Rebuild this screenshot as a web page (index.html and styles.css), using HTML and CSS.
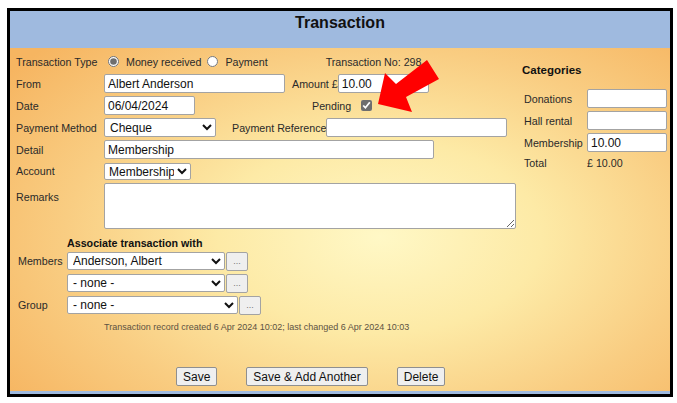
FILE: index.html
```html
<!DOCTYPE html>
<html lang="en">
<head>
  <meta charset="UTF-8" />
  <title>Transaction</title>
<link rel="stylesheet" href="styles.css">
</head>
<body>

<div class="window">
  <div class="titlebar"><h1>Transaction</h1></div>

  <div class="content">
    <div class="main">
      <div class="form">
        <div class="row">
          <span class="label">Transaction Type</span>
          <input type="radio" name="type" class="radio first" checked>
          <span>Money received</span>
          <input type="radio" name="type" class="radio">
          <span>Payment</span>
          <span class="txn-no">Transaction No: 298</span>
        </div>

        <div class="row">
          <span class="label">From</span>
          <input type="text" class="w-from" value="Albert Anderson">
          <span class="amount-label">Amount £</span>
          <input type="text" class="w-amount" value="10.00">
        </div>

        <div class="row">
          <span class="label">Date</span>
          <input type="text" class="w-date" value="06/04/2024">
          <span class="pending-label">Pending</span>
          <input type="checkbox" class="check" checked>
        </div>

        <div class="row">
          <span class="label">Payment Method</span>
          <select class="w-method"><option>Cheque</option></select>
          <span class="ref-label">Payment Reference</span>
          <input type="text" class="w-ref">
        </div>

        <div class="row">
          <span class="label">Detail</span>
          <input type="text" class="w-detail" value="Membership">
        </div>

        <div class="row short">
          <span class="label">Account</span>
          <select class="w-account"><option>Membership</option></select>
        </div>

        <div class="row tall">
          <span class="label">Remarks</span>
          <textarea class="w-remarks"></textarea>
        </div>
      </div>

      <div class="assoc">
        <div class="assoc-title">Associate transaction with</div>
        <div class="assoc-rows">
          <div class="assoc-row">
            <span class="assoc-label">Members</span>
            <select class="w-member"><option>Anderson, Albert</option></select>
            <button class="more">...</button>
          </div>
          <div class="assoc-row">
            <span class="assoc-label"></span>
            <select class="w-member"><option>- none -</option></select>
            <button class="more">...</button>
          </div>
          <div class="assoc-row">
            <span class="assoc-label">Group</span>
            <select class="w-group"><option>- none -</option></select>
            <button class="more">...</button>
          </div>
        </div>
      </div>

      <div class="stamp">Transaction record created 6 Apr 2024 10:02; last changed 6 Apr 2024 10:03</div>

      <div class="actions">
        <button class="btn">Save</button>
        <button class="btn">Save &amp; Add Another</button>
        <button class="btn">Delete</button>
      </div>
    </div>

    <div class="categories">
      <div class="cat-title">Categories</div>
      <div class="cat-grid">
        <span class="cat-label">Donations</span>
        <input type="text" class="w-cat">
        <span class="cat-label">Hall rental</span>
        <input type="text" class="w-cat">
        <span class="cat-label">Membership</span>
        <input type="text" class="w-cat" value="10.00">
        <span class="cat-label">Total</span>
        <span class="cat-total">£ 10.00</span>
      </div>
    </div>
  </div>
</div>

<svg class="arrow" width="677" height="403" viewBox="0 0 677 403">
  <polygon points="378,104 385,73 396,84 427,60 439,79 406,97 412,112" fill="#ff0000"/>
</svg>

</body>
</html>
```

FILE: styles.css
```css
* {
  box-sizing: border-box;
}

body {
  margin: 8px 0 0 7px;
  font-family: "Liberation Sans", Arial, sans-serif;
  font-size: 10.7px;
  color: #2a2a2a;
  background: #fff;
}

.window {
  width: 666px;
  height: 389px;
  border: 3px solid #000;
  display: flex;
  flex-direction: column;
}

.titlebar {
  height: 37px;
  background: #9fbadf;
  text-align: center;
  padding-top: 3px;
}

.titlebar h1 {
  margin: 0;
  font-size: 16px;
  line-height: 18px;
  font-weight: bold;
  color: #111;
}

.content {
  flex: 1;
  display: flex;
  background: radial-gradient(ellipse 70% 80% at 56% 55%, #fff8c6 0%, #fdeaa6 35%, #f9cd82 68%, #f6b561 100%);
  border-bottom: 3px solid #9fbadf;
}

.main {
  width: 512px;
  flex-shrink: 0;
  padding: 4px 0 0 6px;
}

/* form controls */
input[type="text"],
select,
textarea {
  font: 12px "Liberation Sans", Arial, sans-serif;
  color: #111;
  background: #fff;
  border: 1px solid #a3a3a3;
  border-radius: 2px;
  height: 19px;
  padding: 0 3px;
  margin: 0;
}

select {
  padding: 0 1px;
}

.form {
  display: flex;
  flex-direction: column;
  gap: 3px;
}

.row {
  display: flex;
  align-items: center;
  height: 19px;
}

.row.short {
  height: 18px;
}

.row.tall {
  height: 46px;
  align-items: flex-start;
}

.row.tall .label {
  padding-top: 8px;
}

.label {
  width: 88px;
  flex-shrink: 0;
}

.radio {
  width: 11px;
  height: 11px;
  margin: 0 7px 0 6px;
  accent-color: #6e6e6e;
}

.radio.first {
  margin-left: 4px;
}

.txn-no {
  margin-left: 58px;
}

.w-from { width: 181px; }
.amount-label { margin-left: 7px; }
.w-amount { width: 91px; margin-left: 3px; }

.w-date { width: 91px; }
.pending-label { margin-left: 117px; }

.check {
  width: 11px;
  height: 11px;
  margin: 0 0 0 10px;
  accent-color: #6e6e6e;
}

.w-method { width: 112px; }
.ref-label { margin-left: 16px; }
.w-ref { width: 181px; margin-left: 1px; }

.w-detail { width: 330px; }

.w-account {
  width: 87px;
  height: 17px;
  padding: 0;
}

.w-remarks {
  width: 412px;
  height: 46px;
}

/* associate block */
.assoc {
  margin-top: 8px;
  padding-left: 2px;
}

.assoc-title {
  margin-left: 49px;
  font-weight: bold;
  line-height: 12px;
  color: #111;
}

.assoc-rows {
  margin-top: 3px;
  display: flex;
  flex-direction: column;
  gap: 4px;
}

.assoc-row {
  display: flex;
  align-items: center;
  height: 18px;
}

.assoc-label {
  width: 49px;
  flex-shrink: 0;
}

.w-member { width: 158px; height: 18px; }
.w-group { width: 171px; height: 18px; }

.more {
  width: 22px;
  height: 19px;
  margin-left: 1px;
  padding: 0;
  font: 9px "Liberation Sans", Arial, sans-serif;
  color: #777;
  background: #efefef;
  border: 1px solid #a3a3a3;
  border-radius: 2px;
}

.stamp {
  margin: 7px 0 0 88px;
  font-size: 9px;
  line-height: 12px;
  color: #5d5242;
}

.actions {
  margin-top: 34px;
  padding-left: 160px;
  display: flex;
  gap: 29px;
}

.btn {
  height: 19px;
  padding: 0 6px;
  font: 12px "Liberation Sans", Arial, sans-serif;
  color: #111;
  background: #efefef;
  border: 1px solid #8f8f8f;
  border-radius: 2px;
}

/* categories column */
.categories {
  flex: 1;
  padding: 15px 3px 0 0;
}

.cat-title {
  font-size: 11.5px;
  line-height: 14px;
  font-weight: bold;
  color: #111;
}

.cat-grid {
  margin-top: 12px;
  display: grid;
  grid-template-columns: 65px 80px;
  row-gap: 3px;
  align-items: center;
}

.cat-label {
  margin-left: 2px;
}

.w-cat {
  width: 80px;
}

.cat-total {
  line-height: 16px;
}

.arrow {
  position: absolute;
  left: 0;
  top: 0;
  pointer-events: none;
}
```
